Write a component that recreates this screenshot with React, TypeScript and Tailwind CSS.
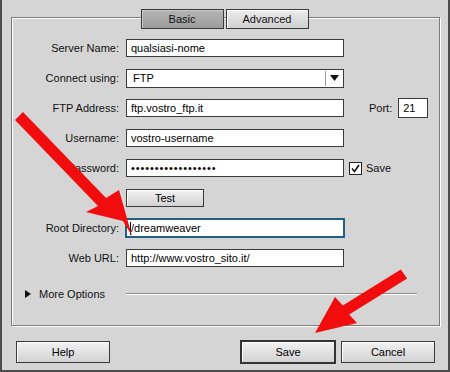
import React from "react";

const font = { fontFamily: '"Liberation Sans", Arial, sans-serif' };

function Label({ children }: { children: React.ReactNode }) {
  return <div className="w-[108px] shrink-0 text-right pr-[1px] text-[11px] text-[#111]">{children}</div>;
}

function Field({ value }: { value: string }) {
  return (
    <div className="ml-[6px] w-[218px] h-[18px] bg-white border border-[#3a3a3a] flex items-center pl-[4px] text-[11px] text-black">
      {value}
    </div>
  );
}

function Btn({ children, w, def }: { children: React.ReactNode; w: string; def?: boolean }) {
  return (
    <div
      className={`${w} flex items-center justify-center text-[11px] text-black bg-gradient-to-b from-[#f2f2f2] to-[#d2d2d2] shadow-[inset_1px_1px_0_#fff] ${
        def ? "border-2 border-[#333] h-[24px]" : "border border-[#3a3a3a] h-[22px]"
      }`}
    >
      {children}
    </div>
  );
}

export default function App() {
  return (
    <div
      className="relative w-[450px] h-[372px] bg-[#d5d5d5] border-l-2 border-r-2 border-b-2 border-[#4c4c4c] box-border pt-[17px] overflow-hidden"
      style={font}
    >
      {/* Panel */}
      <div className="ml-[9px] w-[429px] h-[309px] border border-[#7c7c7c] shadow-[inset_1px_1px_0_#fff,1px_1px_0_#fff] box-border">
        {/* Tabs */}
        <div className="-mt-[9px] flex justify-center gap-[2px] pr-[2px]">
          <div className="w-[83px] h-[20px] border border-[#3a3a3a] bg-gradient-to-b from-[#b4b4b4] to-[#9c9c9c] shadow-[inset_1px_1px_0_#c8c8c8] flex items-center justify-center text-[11px] text-[#111]">
            Basic
          </div>
          <div className="w-[83px] h-[20px] border border-[#3a3a3a] bg-gradient-to-b from-[#ececec] to-[#d0d0d0] shadow-[inset_1px_1px_0_#fff] flex items-center justify-center text-[11px] text-[#111]">
            Advanced
          </div>
        </div>

        <div className="mt-[10px] flex flex-col gap-[12px]">
          <div className="flex items-center h-[18px]">
            <Label>Server Name:</Label>
            <Field value="qualsiasi-nome" />
          </div>
          <div className="flex items-center h-[18px]">
            <Label>Connect using:</Label>
            <div className="ml-[6px] w-[218px] h-[19px] bg-white border border-[#3a3a3a] flex items-center text-[11px] text-black">
              <div className="flex-1 pl-[6px]">FTP</div>
              <div className="w-[1px] h-[15px] bg-[#9a9a9a]" />
              <div className="w-[17px] flex items-center justify-center">
                <svg width="9" height="6" viewBox="0 0 9 6">
                  <polygon points="0,0 9,0 4.5,6" fill="#111" />
                </svg>
              </div>
            </div>
          </div>
          <div className="flex items-center h-[18px]">
            <Label>FTP Address:</Label>
            <Field value="ftp.vostro_ftp.it" />
            <div className="ml-[25px] text-[11px] text-[#111]">Port:</div>
            <div className="ml-[6px] w-[30px] h-[20px] bg-white border border-[#3a3a3a] flex items-center pl-[4px] text-[11px] text-black">
              21
            </div>
          </div>
          <div className="flex items-center h-[18px]">
            <Label>Username:</Label>
            <Field value="vostro-username" />
          </div>
          <div className="flex items-center h-[18px]">
            <Label>Password:</Label>
            <div className="ml-[6px] w-[218px] h-[18px] bg-white border border-[#3a3a3a] flex items-center pl-[4px] text-[11px] text-black tracking-[0.9px]">
              ••••••••••••••••••
            </div>
            <div className="ml-[5px] w-[13px] h-[13px] bg-white border border-[#222] flex items-center justify-center">
              <svg width="9" height="9" viewBox="0 0 9 9">
                <polyline points="1,4.5 3.5,7.5 8,1" fill="none" stroke="#111" strokeWidth="1.6" />
              </svg>
            </div>
            <div className="ml-[4px] text-[11px] text-[#111]">Save</div>
          </div>
          <div className="flex items-center h-[18px]">
            <div className="w-[108px] shrink-0" />
            <div className="ml-[6px] w-[78px] h-[18px] border border-[#3a3a3a] bg-gradient-to-b from-[#f2f2f2] to-[#d2d2d2] shadow-[inset_1px_1px_0_#fff] flex items-center justify-center text-[11px] text-black">
              Test
            </div>
          </div>
          <div className="flex items-center h-[18px]">
            <Label>Root Directory:</Label>
            <div className="ml-[5px] w-[220px] h-[20px] bg-white border-2 border-[#235f84] flex items-center pl-[3px] text-[11px] text-black">
              <span className="inline-block w-[1px] h-[13px] bg-black" />
              /dreamweaver
            </div>
          </div>
          <div className="flex items-center h-[18px]">
            <Label>Web URL:</Label>
            <Field value="http://www.vostro_sito.it/" />
          </div>
        </div>

        {/* More Options */}
        <div className="mt-[20px] h-[14px] flex items-center">
          <svg className="ml-[13px]" width="6" height="8" viewBox="0 0 6 8">
            <polygon points="0,0 6,4 0,8" fill="#111" />
          </svg>
          <div className="ml-[8px] text-[11px] text-[#111]">More Options</div>
          <div className="ml-[21px] w-[291px] h-[2px] border-t border-[#8a8a8a] border-b border-b-white" />
        </div>
      </div>

      {/* Bottom buttons */}
      <div className="mt-[14px] flex items-center pl-[14px]">
        <Btn w="w-[94px]">Help</Btn>
        <div className="ml-[130px]">
          <Btn w="w-[96px]" def>
            Save
          </Btn>
        </div>
        <div className="ml-[5px]">
          <Btn w="w-[94px]">Cancel</Btn>
        </div>
      </div>

      {/* Red arrows overlay */}
      <svg className="absolute left-0 top-0 pointer-events-none" width="450" height="372" viewBox="0 0 450 372">
        <polygon
          points="13,120 21,112 104,198 117,190 130,236 121,221 84,212 96,206"
          fill="#f10d0d"
        />
        <polygon
          points="398.8,269.5 405.2,278.5 347.2,314.5 355,323 313,333 333,297 340.8,305.5"
          fill="#f10d0d"
        />
      </svg>
    </div>
  );
}
